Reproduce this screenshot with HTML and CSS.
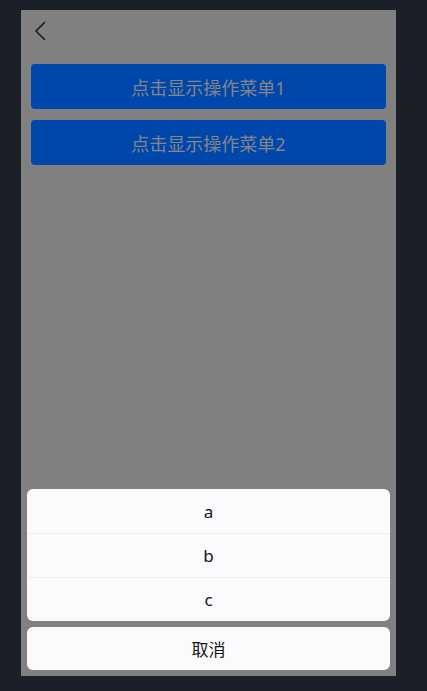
FILE: index.html
```html
<!DOCTYPE html>
<html lang="zh">
<head>
<meta charset="utf-8">
<link rel="stylesheet" href="styles.css">
</head>
<body>
<div class="frame">
  <div class="nav">
    <svg class="back" width="12" height="20" viewBox="0 0 12 20"><path d="M10.5 1.5 L2 10 L10.5 18.5" fill="none" stroke="#1a1a1a" stroke-width="1.6" stroke-linecap="round" stroke-linejoin="round"/></svg>
  </div>
  <div class="buttons">
    <div class="btn">点击显示操作菜单1</div>
    <div class="btn">点击显示操作菜单2</div>
  </div>
  <div class="sheet">
    <div class="card">
      <div class="item">a</div>
      <div class="item">b</div>
      <div class="item">c</div>
    </div>
    <div class="card cancel">
      <div class="item">取消</div>
    </div>
  </div>
</div>
</body>
</html>
```

FILE: styles.css
```css
html, body {
  margin: 0;
  padding: 0;
  background: #1b2028;
}
body {
  padding: 10px 31px 15px 21px;
  font-family: "Noto Sans", "Noto Sans CJK SC", sans-serif;
}
.frame {
  width: 375px;
  height: 666px;
  background: #808080;
  display: flex;
  flex-direction: column;
}
.nav {
  height: 43px;
  display: flex;
  align-items: center;
  padding-left: 13px;
  box-sizing: border-box;
}
.back {
  display: block;
  margin-top: -1px;
}
.buttons {
  display: flex;
  flex-direction: column;
  gap: 11px;
  padding: 11px 10px 0;
}
.btn {
  height: 45px;
  background: #0047ab;
  border-radius: 4px;
  color: #858585;
  font-size: 18px;
  display: flex;
  align-items: center;
  justify-content: center;
}
.sheet {
  margin-top: auto;
  padding: 0 6px 6px;
  display: flex;
  flex-direction: column;
  gap: 6px;
}
.card {
  background: #fbfbfd;
  border-radius: 6px;
  overflow: hidden;
}
.item {
  height: 44px;
  display: flex;
  align-items: center;
  justify-content: center;
  font-size: 17px;
  color: #141414;
}
.item + .item {
  border-top: 1px solid #eeeef0;
  height: 43px;
}
.cancel .item {
  height: 43px;
}
```
